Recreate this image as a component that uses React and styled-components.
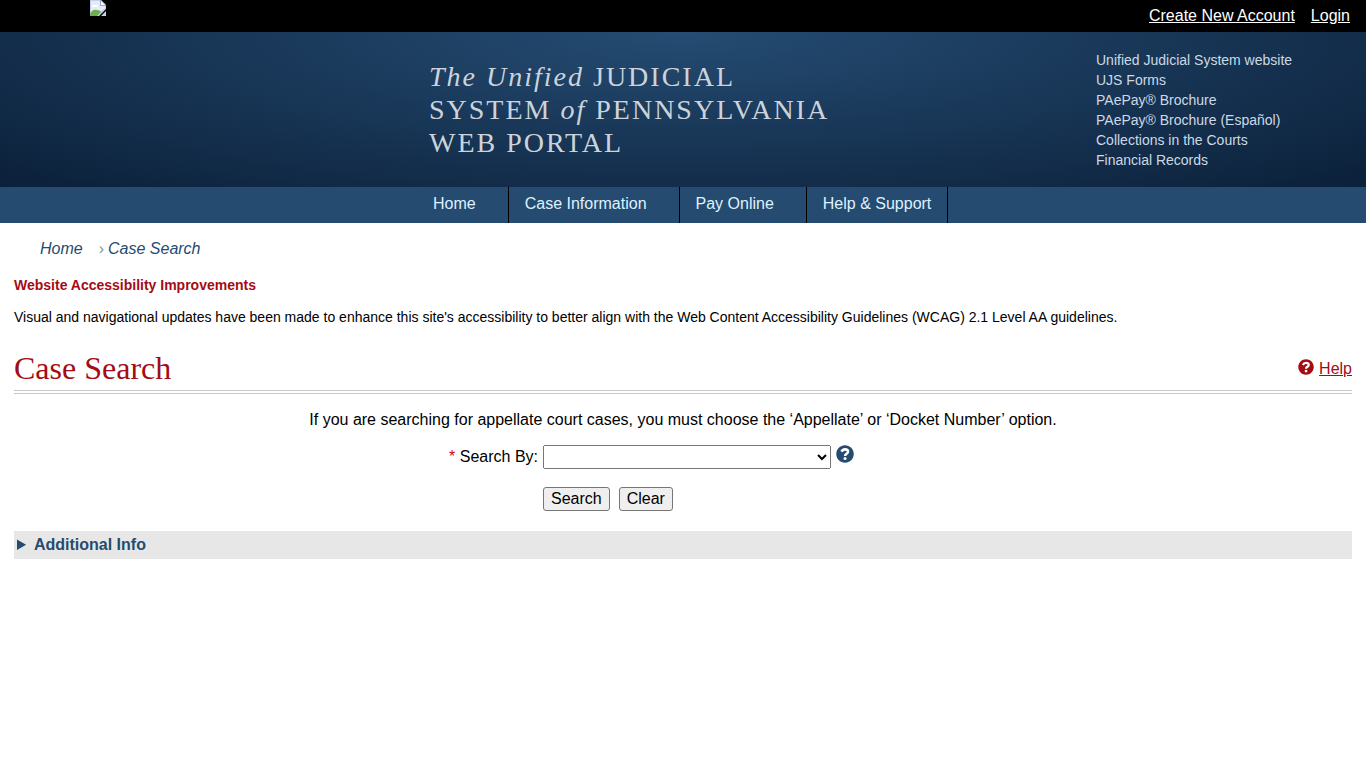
import { useState } from "react";
import styled, { createGlobalStyle } from "styled-components";

const GlobalStyle = createGlobalStyle`
  body {
    margin: 0;
    background: #fff;
    color: #000;
    font-family: "Liberation Sans", Arial, sans-serif;
    font-size: 16px;
    line-height: 20px;
  }
`;

const TopBar = styled.div`
  display: flex;
  justify-content: space-between;
  align-items: flex-start;
  height: 32px;
  padding: 0 16px 0 90px;
  background: #000;
`;

const AccountLinks = styled.div`
  display: flex;
  gap: 16px;
  padding-top: 6px;
  a {
    color: #fff;
  }
`;

const Banner = styled.header`
  display: flex;
  justify-content: flex-end;
  min-height: 155px;
  background: radial-gradient(
    ellipse farthest-corner at 50% 0,
    #254c73 0%,
    #0b2039 100%
  );
`;

const Title = styled.div`
  flex: 1;
  padding: 28px 0 0 429px;
  color: #ccd3da;
  font-family: "Liberation Serif", "Times New Roman", serif;
  font-size: 28px;
  line-height: 33px;
  letter-spacing: 2px;
`;

const SiteLinks = styled.ul`
  width: 270px;
  margin: 0;
  padding: 18px 0 0;
  list-style: none;
  font-size: 14px;
  a {
    color: #ccd9e5;
    text-decoration: none;
  }
`;

const Nav = styled.nav`
  display: flex;
  padding-left: 417px;
  background: #254b70;
`;

const NavLink = styled.a`
  padding: 7px ${(props) => (props.$menu ? 32 : 16)}px 9px 16px;
  border-right: 1px solid #000;
  color: #dff1ff;
  text-decoration: none;
`;

const Breadcrumb = styled.nav`
  display: flex;
  gap: 16px;
  padding: 16px 40px 0;
  font-style: italic;
  a {
    color: #254b70;
    text-decoration: none;
  }
`;

const Separator = styled.span`
  margin-right: 4px;
  color: #7c93ad;
  font-style: normal;
`;

const Main = styled.main`
  padding: 16px 14px;
`;

const Notice = styled.section`
  font-size: 14px;
  p {
    margin: 12px 0 0;
  }
`;

const NoticeTitle = styled.strong`
  color: #a50b14;
`;

const PageHeading = styled.div`
  display: flex;
  justify-content: space-between;
  align-items: center;
  margin-top: 20px;
  border-bottom: 4px double #c8c8c8;
  h1 {
    margin: 0;
    color: #a50b14;
    font-family: "Liberation Serif", "Times New Roman", serif;
    font-size: 32px;
    font-weight: normal;
    line-height: 43px;
  }
`;

const HelpLink = styled.a`
  display: flex;
  align-items: flex-start;
  gap: 5px;
  color: #a50b14;
  text-decoration: none;
  span {
    text-decoration: underline;
  }
`;

const Hint = styled.p`
  margin: 16px 0 0;
  text-align: center;
`;

const Form = styled.form`
  display: grid;
  grid-template-columns: 529px 1fr;
  row-gap: 18px;
  margin-top: 15px;
`;

const Label = styled.label`
  padding: 2px 5px 0 0;
  text-align: right;
`;

const Required = styled.span`
  color: #d0021b;
`;

const Field = styled.div`
  display: flex;
  align-items: flex-start;
  gap: 5px;
`;

const Select = styled.select`
  width: 288px;
  height: 24px;
  font-family: inherit;
  font-size: 16px;
`;

const Buttons = styled.div`
  display: flex;
  grid-column: 2;
  gap: 9px;
`;

const Button = styled.button`
  height: 24px;
  padding: 1px 7px;
  border: 1px solid #767676;
  border-radius: 3px;
  background: #efefef;
  color: #000;
  font-family: inherit;
  font-size: 16px;
  line-height: 20px;
`;

const IconButton = styled.button`
  display: flex;
  padding: 0;
  border: 0;
  background: none;
  color: #254b70;
`;

const AdditionalInfo = styled.details`
  margin-top: 20px;
  background: #e7e7e7;
  color: #254b70;
  summary {
    padding: 4px 3px;
    font-weight: bold;
  }
`;

const siteLinks = [
  "Unified Judicial System website",
  "UJS Forms",
  "PAePay® Brochure",
  "PAePay® Brochure (Español)",
  "Collections in the Courts",
  "Financial Records",
];

const HelpIcon = ({ size }) => (
  <svg width={size} height={size} viewBox="0 0 512 512" aria-hidden="true">
    <path
      fill="currentColor"
      d="M504 256c0 137-111 248-248 248S8 393 8 256 119 8 256 8s248 111 248 248z"
    />
    <path
      fill="none"
      stroke="#fff"
      strokeWidth="72"
      d="M156 190c22-44 54-66 100-66 52 0 87 27 87 66 0 60-86 58-86 122"
    />
    <circle cx="257" cy="386" r="44" fill="#fff" />
  </svg>
);

const MissingImage = () => (
  <svg width="16" height="16" viewBox="0 0 16 16" role="img" aria-label="Seal">
    <path fill="#c3d2ee" d="M0 0h11l5 5v4L9 16H0z" />
    <path fill="#e4ebf8" d="M1 1h9v4h5v3l-6 5H1z" />
    <path fill="#fff" d="M2 7a2 2 0 0 1 3-2 2 2 0 0 1 3 2z" />
    <path fill="#6aaf4c" d="M0 16c0-4 3-7 7-6 2 0 4 1 4 2l-4 4z" />
    <path fill="#98a4bc" d="M10 0h1l5 5v1h-6z" />
    <path fill="#fff" d="M11 1l4 4h-4z" />
    <path fill="#c3d2ee" d="M16 11v5h-5z" />
  </svg>
);

export default function App() {
  const [searchBy, setSearchBy] = useState("");

  return (
    <>
      <GlobalStyle />
      <TopBar>
        <MissingImage />
        <AccountLinks>
          <a href="#register">Create New Account</a>
          <a href="#login">Login</a>
        </AccountLinks>
      </TopBar>
      <Banner>
        <Title>
          <em>The Unified</em> JUDICIAL
          <br />
          SYSTEM <em>of</em> PENNSYLVANIA
          <br />
          WEB PORTAL
        </Title>
        <SiteLinks>
          {siteLinks.map((link) => (
            <li key={link}>
              <a href="#site">{link}</a>
            </li>
          ))}
        </SiteLinks>
      </Banner>
      <Nav>
        <NavLink href="#home" $menu>
          Home
        </NavLink>
        <NavLink href="#cases" $menu>
          Case Information
        </NavLink>
        <NavLink href="#pay" $menu>
          Pay Online
        </NavLink>
        <NavLink href="#support">Help &amp; Support</NavLink>
      </Nav>
      <Breadcrumb aria-label="Breadcrumb">
        <a href="#home">Home</a>
        <span>
          <Separator>›</Separator>
          <a href="#search">Case Search</a>
        </span>
      </Breadcrumb>
      <Main>
        <Notice>
          <NoticeTitle>Website Accessibility Improvements</NoticeTitle>
          <p>
            Visual and navigational updates have been made to enhance this
            site's accessibility to better align with the Web Content
            Accessibility Guidelines (WCAG) 2.1 Level AA guidelines.
          </p>
        </Notice>
        <PageHeading>
          <h1>Case Search</h1>
          <HelpLink href="#help">
            <HelpIcon size={16} />
            <span>Help</span>
          </HelpLink>
        </PageHeading>
        <Hint>
          If you are searching for appellate court cases, you must choose the
          ‘Appellate’ or ‘Docket Number’ option.
        </Hint>
        <Form onSubmit={(e) => e.preventDefault()}>
          <Label htmlFor="search-by">
            <Required>*</Required> Search By:
          </Label>
          <Field>
            <Select
              id="search-by"
              value={searchBy}
              onChange={(e) => setSearchBy(e.target.value)}
            >
              <option value=""></option>
            </Select>
            <IconButton type="button" aria-label="Search help">
              <HelpIcon size={18} />
            </IconButton>
          </Field>
          <Buttons>
            <Button type="submit">Search</Button>
            <Button type="button" onClick={() => setSearchBy("")}>
              Clear
            </Button>
          </Buttons>
        </Form>
        <AdditionalInfo>
          <summary>Additional Info</summary>
        </AdditionalInfo>
      </Main>
    </>
  );
}
